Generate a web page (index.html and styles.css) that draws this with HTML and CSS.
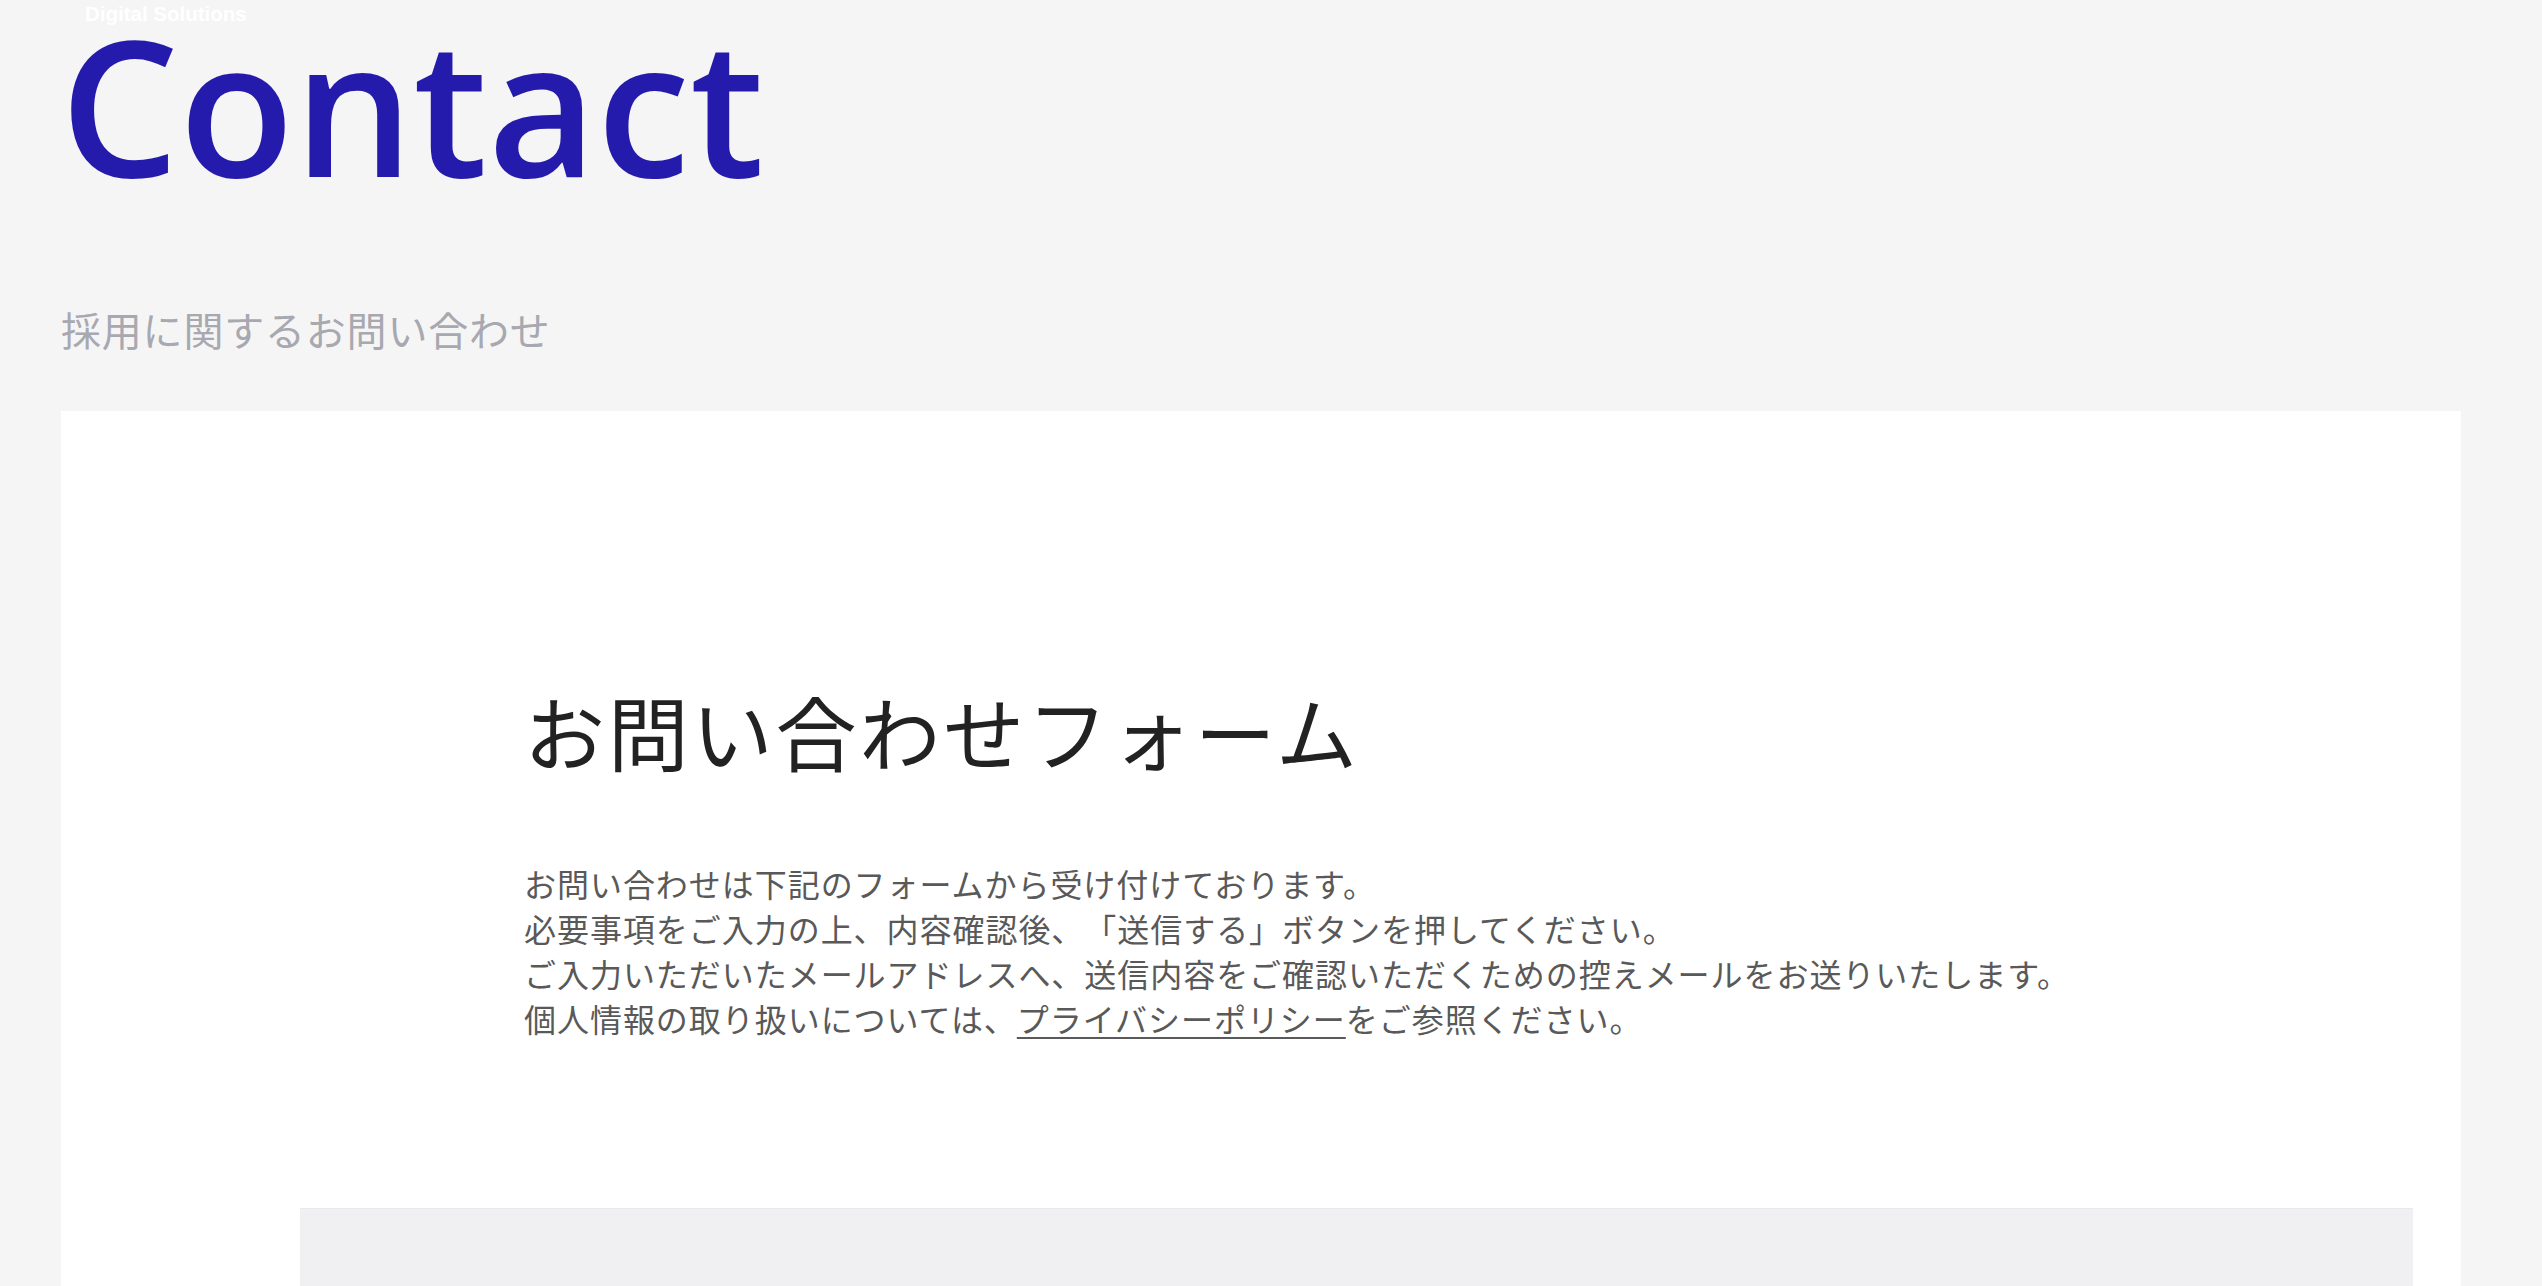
FILE: index.html
```html
<!DOCTYPE html>
<html lang="ja">
<head>
  <meta charset="UTF-8" />
  <meta name="viewport" content="width=device-width, initial-scale=1.0"/>
  <title>Contact | Digital Solutions</title>
  <link rel="stylesheet" href="styles.css">
</head>
<body>
  <header class="page-head">
    <span class="brand">Digital Solutions</span>
    <h1 class="page-title">Contact</h1>
    <p class="page-lead">採用に関するお問い合わせ</p>
  </header>

  <main class="card">
    <section class="intro">
      <h2>お問い合わせフォーム</h2>
      <p>
        お問い合わせは下記のフォームから受け付けております。<br>
        必要事項をご入力の上、内容確認後、「送信する」ボタンを押してください。<br>
        ご入力いただいたメールアドレスへ、送信内容をご確認いただくための控えメールをお送りいたします。<br>
        個人情報の取り扱いについては、<a href="#">プライバシーポリシー</a>をご参照ください。
      </p>
    </section>

    <div class="form-box"></div>
  </main>
</body>
</html>
```

FILE: styles.css
```css
* {
  box-sizing: border-box;
  margin: 0;
  padding: 0;
}

body {
  background-color: #f5f5f5;
  color: #222;
  font-family: "Noto Sans CJK JP", "Noto Sans", sans-serif;
  padding: 0 81px 0 61px;
  text-spacing-trim: space-all;
}

.page-head {
  position: relative;
  padding-top: 10px;
}

.brand {
  position: absolute;
  top: 2px;
  left: 24px;
  color: #fff;
  font-family: "Liberation Sans", Arial, sans-serif;
  font-weight: 700;
  font-size: 20.5px;
}

.page-title {
  font-family: "Open Sans", sans-serif;
  font-weight: 600;
  font-size: 188px;
  line-height: 1;
  color: #241aab;
  margin-left: -1px;
}

.page-lead {
  margin-top: 111px;
  font-size: 40px;
  line-height: 1;
  color: #a8a8b0;
  letter-spacing: 0.02em;
}

.card {
  margin-top: 62px;
  background-color: #fff;
  padding: 278px 48px 0 239px;
}

.intro {
  padding-left: 224px;
}

.intro h2 {
  font-size: 81px;
  font-weight: 400;
  line-height: 1;
  letter-spacing: 0.035em;
  color: #222;
}

.intro p {
  margin-top: 91px;
  font-size: 32px;
  line-height: 45px;
  letter-spacing: 0.03em;
  color: #595959;
}

.intro a {
  color: inherit;
  text-decoration: underline;
  text-decoration-thickness: 2px;
  text-underline-offset: 5px;
}

.form-box {
  margin-top: 167px;
  height: 480px;
  background-color: #f0f0f2;
  border-top: 1px solid #e9e9ec;
}
```
